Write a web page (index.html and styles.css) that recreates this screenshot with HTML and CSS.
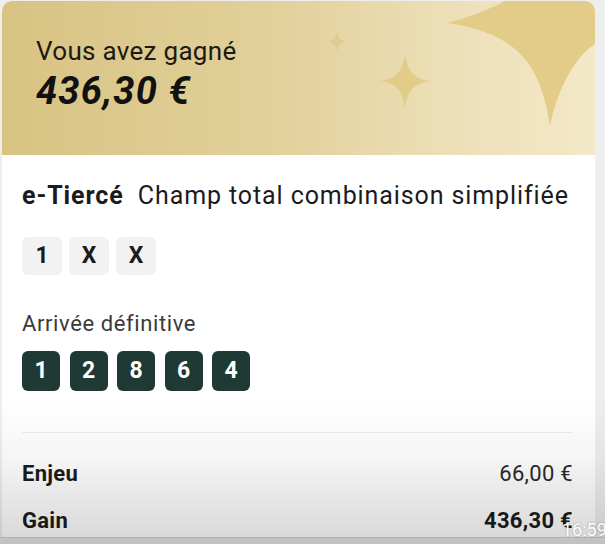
FILE: index.html
```html
<!DOCTYPE html>
<html>
<head>
<meta charset="utf-8"/>
<title>Pari gagné</title>
<meta name="viewport" content="width=device-width"/>
<link rel="stylesheet" href="styles.css">
</head>
<body>
<div class="m-card">
    <!-- header -->
    <div class="m-head">
        <svg class="u-stars" viewBox="0 0 593 154" preserveAspectRatio="none">
            <path d="M445,22 C468,16 488,8 503,0 L593,0 L593,43 C578,52 557,80 548,125 C540,70 520,32 445,22 Z"/>
            <path d="M403,52 C405,70 412,78 428,80 C412,82 405,90 403,108 C401,90 394,82 378,80 C394,78 401,70 403,52 Z"/>
            <path class="faint" d="M335,30 C336,37 339,40 345,40 C339,41 336,44 335,51 C334,44 331,41 325,40 C331,40 334,37 335,30 Z"/>
        </svg>
        <p class="u-lbl">Vous avez gagné</p>
        <p class="u-amount">436,30 €</p>
    </div>
    <!-- body -->
    <div class="m-body">
        <p class="u-title"><b>e-Tiercé</b>&nbsp; Champ total combinaison simplifiée</p>
        <ul class="u-chips">
            <li>1</li>
            <li>X</li>
            <li>X</li>
        </ul>
        <p class="u-sub">Arrivée définitive</p>
        <ul class="u-arr">
            <li>1</li>
            <li>2</li>
            <li>8</li>
            <li>6</li>
            <li>4</li>
        </ul>
        <hr>
        <div class="u-row"><b>Enjeu</b><span>66,00 €</span></div>
        <div class="u-row"><b>Gain</b><b>436,30 €</b></div>
    </div>
</div>
<div class="u-shade"></div>
<span class="u-time">16:59</span>
</body>
</html>
```

FILE: styles.css
```css
/* reset */
html,body,div,ul,li,p,hr{margin:0;padding:0;}
li{list-style:none;}
body{background-color:#eeeeee;font-family:Roboto,"Liberation Sans",sans-serif;color:#1b1b1b;height:544px;overflow:hidden;}

.m-card{margin:1px 10px 0 2px;background-color:#fff;border-radius:10px 10px 0 0;height:560px;overflow:hidden;}
.m-head{position:relative;height:154px;padding:35px 0 0 34px;box-sizing:border-box;background:linear-gradient(90deg,#d8c383 0%,#e2d09a 45%,#eee1bb 80%,#f3e8c8 100%);overflow:hidden;}
.m-head .u-stars{position:absolute;left:0;top:0;width:593px;height:154px;}
.m-head .u-stars path{fill:#e3cc87;}
.m-head .u-stars path.faint{fill:#e0cc8e;}
.m-head p{position:relative;}
.u-lbl{font-size:26px;line-height:30px;color:#1d1a12;letter-spacing:0.3px;}
.u-amount{margin-top:3px;font-size:38px;line-height:45px;font-weight:bold;font-style:italic;color:#111;letter-spacing:1.2px;}

.m-body{padding:27px 22px 0 20px;}
.u-title{font-size:25px;line-height:28px;color:#1b1b1b;letter-spacing:0.9px;}
.u-title b{font-weight:bold;}
.u-chips{display:flex;gap:7px;margin-top:27px;}
.u-chips li{width:40px;height:38px;line-height:38px;text-align:center;background-color:#f2f2f2;border-radius:6px;font-size:23px;font-weight:bold;color:#1b1b1b;}
.u-sub{margin-top:36px;font-size:22px;line-height:26px;color:#3a3a3a;letter-spacing:0.6px;}
.u-arr{display:flex;gap:9.5px;margin-top:14px;}
.u-arr li{width:38px;height:40px;line-height:40px;text-align:center;background-color:#1f3934;border-radius:6px;font-size:23px;font-weight:bold;color:#fff;}
.m-body hr{margin:41px 0 0;border:0;border-top:1px solid #ececec;height:0;}
.u-row{display:flex;justify-content:space-between;font-size:22px;line-height:26px;margin-top:28px;letter-spacing:0.3px;}
.u-row + .u-row{margin-top:21px;}
.u-row span{color:#2a2a2a;}

/* video overlay */
.u-shade{position:absolute;left:0;top:400px;width:605px;height:144px;background:linear-gradient(180deg,rgba(0,0,0,0) 0%,rgba(0,0,0,0.04) 40%,rgba(0,0,0,0.15) 95%,rgba(0,0,0,0.2) 100%);pointer-events:none;}
.u-shade:after{content:"";position:absolute;left:0;bottom:0;width:100%;height:6px;background-color:#c2c2c2;border-top:1px solid #b0b0b0;}
.u-time{position:absolute;left:562px;top:520px;font-size:18px;line-height:20px;color:#fff;text-shadow:0 0 2px rgba(0,0,0,0.35);white-space:nowrap;}
```
